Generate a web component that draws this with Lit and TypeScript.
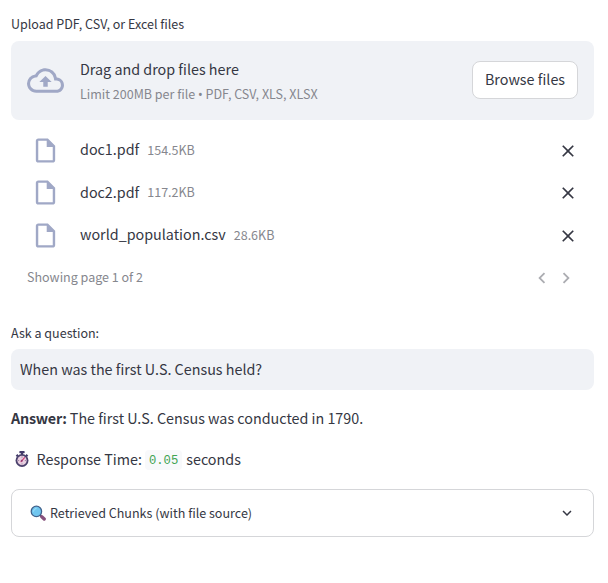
import { LitElement, html, css, svg } from "lit";
import { customElement, property } from "lit/decorators.js";

const FILES = [
  { name: "doc1.pdf", size: "154.5KB" },
  { name: "doc2.pdf", size: "117.2KB" },
  { name: "world_population.csv", size: "28.6KB" },
];

const ICONS = {
  cloud: svg`<path d="M19.35 10.04A7.49 7.49 0 0012 4C9.11 4 6.6 5.64 5.35 8.04A5.994 5.994 0 000 14c0 3.31 2.69 6 6 6h13c2.76 0 5-2.24 5-5 0-2.64-2.05-4.78-4.65-4.96zM19 18H6c-2.21 0-4-1.79-4-4 0-2.05 1.53-3.76 3.56-3.97l1.07-.11.5-.95A5.469 5.469 0 0112 6c2.62 0 4.88 1.86 5.39 4.43l.3 1.5 1.53.11A2.98 2.98 0 0122 15c0 1.65-1.35 3-3 3zM8 13h2.55v3h2.9v-3H16l-4-4z"/>`,
  file: svg`<path d="M14 2H6c-1.1 0-2 .9-2 2v16c0 1.1.9 2 2 2h12c1.1 0 2-.9 2-2V8l-6-6zM6 20V4h7v5h5v11H6z"/>`,
  close: svg`<path d="M19 6.41L17.59 5 12 10.59 6.41 5 5 6.41 10.59 12 5 17.59 6.41 19 12 13.41 17.59 19 19 17.59 13.41 12z"/>`,
  left: svg`<path d="M15.41 7.41L14 6l-6 6 6 6 1.41-1.41L10.83 12z"/>`,
  right: svg`<path d="M10 6L8.59 7.41 13.17 12l-4.58 4.59L10 18l6-6z"/>`,
  down: svg`<path d="M16.59 8.59L12 13.17 7.41 8.59 6 10l6 6 6-6z"/>`,
  stopwatch: svg`
    <rect x="8" y="0" width="8" height="3.2" rx="1" fill="#433b6b"/>
    <rect x="10.4" y="3" width="3.2" height="3" fill="#433b6b"/>
    <path d="M2.6 7l2.4-2.4 2 2-2.4 2.4zM21.4 7L19 4.6l-2 2L19.4 9z" fill="#433b6b"/>
    <circle cx="12" cy="14.3" r="9.7" fill="#4a416c"/>
    <circle cx="12" cy="14.3" r="7" fill="#e8cfe0"/>
    <path d="M12 8.2v1.8M12 18.6v1.8M6 14.3h1.7M16.3 14.3h1.7" stroke="#8b7394" stroke-width="1.2"/>
    <path d="M10.6 15.8l5.2-5.8" stroke="#d0427b" stroke-width="1.8" stroke-linecap="round"/>
    <circle cx="11.6" cy="14.7" r="1.5" fill="#8d3a73"/>`,
  search: svg`
    <path d="M15.3 15.3l2.2 2.2" stroke="#433b6b" stroke-width="3"/>
    <path d="M17.7 17.7l3.6 3.4" stroke="#87517c" stroke-width="5" stroke-linecap="round"/>
    <circle cx="9.6" cy="9.6" r="7.8" fill="#70c6ef" stroke="#40628c" stroke-width="1.9"/>
    <path d="M5.2 9.3a4.6 4.6 0 014-4.2" stroke="#a3e1fb" stroke-width="1.5" fill="none" stroke-linecap="round"/>`,
};

@customElement("ui-icon")
class UiIcon extends LitElement {
  @property() name: keyof typeof ICONS = "file";
  static styles = css`
    :host { display: block; flex: none; }
    svg { display: block; width: 100%; height: 100%; fill: currentColor; }
  `;
  render() {
    return html`<svg viewBox="0 0 24 24" aria-hidden="true">${ICONS[this.name]}</svg>`;
  }
}

@customElement("app-root")
class AppRoot extends LitElement {
  static styles = css`
    :host {
      display: block;
      box-sizing: border-box;
      height: 583px;
      padding: 14px 14px 0 11px;
      background: #fff;
      color: #353743;
      font-family: "Noto Sans CJK SC", "Noto Sans", sans-serif;
      font-size: 14.33px;
      line-height: 24px;
      white-space: nowrap;
      overflow: hidden;
    }
    * { box-sizing: border-box; }
    button { font: inherit; color: inherit; background: none; border: 0; padding: 0; margin: 0; }
    .label { font-size: 12.53px; line-height: 20px; }
    .drop {
      display: flex; align-items: center; height: 79px; margin-top: 7px;
      padding: 0 16px; background: #f0f2f6; border-radius: 8px;
    }
    .cloud { width: 37px; height: 37px; margin-right: 16px; color: #a0a8c6; }
    .hint { flex: 1; padding-top: 2px; }
    .muted { color: #86878e; font-size: 12.53px; }
    .hint .muted { display: block; margin-top: 1px; }
    .dot { font-family: "Noto Sans", sans-serif; }
    .browse {
      width: 106px; height: 38px; margin-bottom: 2px; background: #fff;
      border: 1px solid #d5d6d9; border-radius: 8px; line-height: 34px; padding-bottom: 2px;
    }
    .files { padding: 9px 16px 0; }
    .row { display: flex; align-items: center; height: 42.5px; }
    .doc { width: 29px; height: 29px; margin: 0 20px 0 4px; color: #a0a8c6; }
    .row .name { padding-bottom: 2px; }
    .row .muted { margin-left: 8px; flex: 1; padding-bottom: 1px; }
    .x { width: 20px; height: 20px; margin-top: 1px; }
    .pager { display: flex; align-items: center; height: 42px; color: #86878e; font-size: 12.53px; }
    .pager span { flex: 1; padding-bottom: 2px; }
    .nav { width: 22px; height: 22px; margin-right: 2px; color: #acadb2; }
    .nav.end { margin-right: 1px; }
    .ask { margin-top: 24px; }
    .field {
      display: flex; align-items: center; height: 41px; margin-top: 6px;
      padding: 0 9px; background: #f0f2f6; border-radius: 8px;
    }
    .answer { margin-top: 16px; letter-spacing: -0.01px; }
    b { font-weight: 700; letter-spacing: -0.22px; }
    .time { display: flex; align-items: center; margin-top: 17px; }
    .watch { width: 16px; height: 16px; margin: 0 6.5px 0 3px; }
    code {
      margin: 2px 4px 0 3px; padding: 1px 4px 0; height: 20px; line-height: 21px;
      border-radius: 4px; background: #f8f9fb; color: #3fa353;
      font-family: "Liberation Mono", monospace; font-size: 12.2px;
    }
    .expander {
      display: flex; align-items: center; height: 48px; margin-top: 18px;
      padding: 0 18px; border: 1px solid #d5d6d9; border-radius: 8px; font-size: 12.56px;
    }
    .lens { width: 16px; height: 16px; margin-right: 4px; }
    .expander span { flex: 1; }
    .down { width: 18px; height: 18px; margin-right: -1px; }
  `;
  render() {
    return html`
      <div class="label">Upload PDF, CSV, or Excel files</div>
      <section class="drop">
        <ui-icon class="cloud" name="cloud"></ui-icon>
        <div class="hint">
          <div>Drag and drop files here</div>
          <span class="muted">Limit 200MB per file <span class="dot">•</span> PDF, CSV, XLS, XLSX</span>
        </div>
        <button class="browse">Browse files</button>
      </section>
      <div class="files">
        ${FILES.map((f) => html`
          <div class="row">
            <ui-icon class="doc" name="file"></ui-icon>
            <span class="name">${f.name}</span><span class="muted">${f.size}</span>
            <button aria-label="Remove"><ui-icon class="x" name="close"></ui-icon></button>
          </div>`)}
        <div class="pager">
          <span>Showing page 1 of 2</span>
          <button aria-label="Previous"><ui-icon class="nav" name="left"></ui-icon></button>
          <button aria-label="Next"><ui-icon class="nav end" name="right"></ui-icon></button>
        </div>
      </div>
      <div class="label ask">Ask a question:</div>
      <div class="field">When was the first U.S. Census held?</div>
      <div class="answer"><b>Answer:</b> The first U.S. Census was conducted in 1790.</div>
      <div class="time">
        <ui-icon class="watch" name="stopwatch"></ui-icon>
        <span>Response Time:</span><code>0.05</code><span>seconds</span>
      </div>
      <div class="expander">
        <ui-icon class="lens" name="search"></ui-icon>
        <span>Retrieved Chunks (with file source)</span>
        <ui-icon class="down" name="down"></ui-icon>
      </div>
    `;
  }
}
